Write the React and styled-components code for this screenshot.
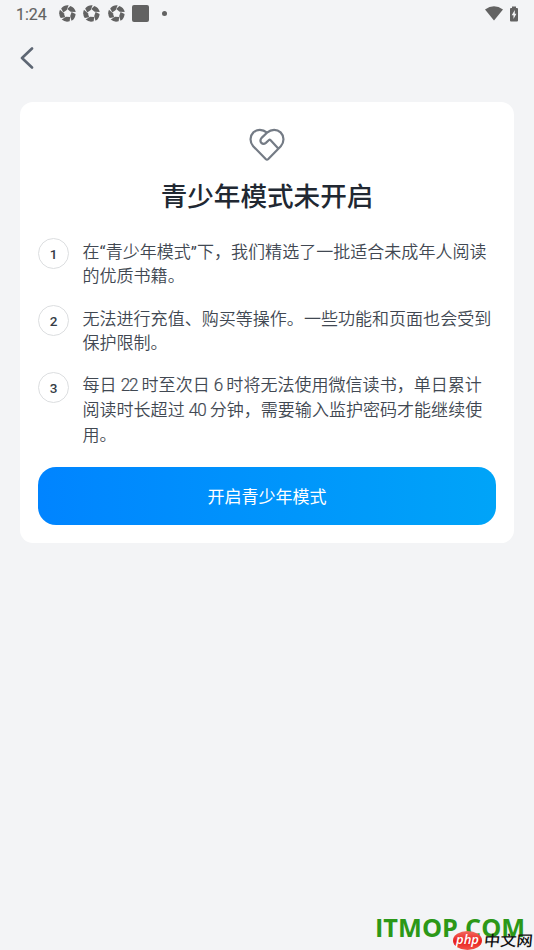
import React from "react";
import styled, { createGlobalStyle } from "styled-components";

const GlobalStyle = createGlobalStyle`
  * { box-sizing: border-box; }
  body {
    margin: 0;
    background: #f3f4f6;
    font-family: Roboto, "Noto Sans CJK SC", sans-serif;
  }
`;

const Screen = styled.div`
  position: relative;
  width: 534px;
  height: 950px;
  overflow: hidden;
  background: #f3f4f6;
`;

const StatusBar = styled.header`
  display: flex;
  align-items: center;
  justify-content: space-between;
  height: 27px;
  padding: 0 15px 0 16px;
  color: #626262;
`;

const StatusGroup = styled.div`
  display: flex;
  align-items: center;
  gap: ${(p) => p.$gap}px;
`;

const Clock = styled.span`
  width: 36px;
  padding-top: 2px;
  font-size: 16px;
  line-height: 26px;
  letter-spacing: 0;
  -webkit-text-stroke: 0.15px currentColor;
  margin-right: -1px;
`;

const Square = styled.span`
  width: 17px;
  height: 17px;
  border-radius: 2px;
  background: #626262;
`;

const Dot = styled.span`
  width: 5px;
  height: 5px;
  margin-left: 5px;
  border-radius: 50%;
  background: #626262;
`;

const Icon = styled.svg`
  display: block;
  flex: none;
`;

const NavBar = styled.nav`
  display: flex;
  align-items: center;
  height: 62px;
  padding-left: 20px;
`;

const BackButton = styled.button`
  display: flex;
  padding: 0;
  border: 0;
  background: none;
`;

const Card = styled.main`
  display: flex;
  flex-direction: column;
  align-items: center;
  width: 494px;
  height: 441px;
  margin: 13.4px 20px 0;
  padding: 26px 18px 18px;
  border-radius: 13px;
  background: #fff;
`;

const Title = styled.h1`
  margin: 12.6px 0 0;
  color: #212832;
  font-family: "Noto Sans CJK SC", sans-serif;
  font-size: 26.6px;
  font-weight: 500;
  line-height: 40px;
  white-space: nowrap;
`;

const Rules = styled.ol`
  display: flex;
  flex-direction: column;
  gap: 17.6px;
  width: 100%;
  margin: 24.9px 0 0;
  padding: 0;
  list-style: none;
`;

const Rule = styled.li`
  display: flex;
  gap: 13.5px;
`;

const Badge = styled.span`
  display: flex;
  flex: none;
  align-items: center;
  justify-content: center;
  width: 31px;
  height: 31px;
  padding-top: 1px;
  margin-top: -1.7px;
  border: 1px solid #dcdee0;
  border-radius: 50%;
  color: #353c46;
  font-size: 13.5px;
  font-weight: 500;
`;

const RuleText = styled.p`
  margin: 0;
  color: #414852;
  font-size: 17.04px;
  font-weight: 350;
  line-height: 24.6px;
  white-space: nowrap;
`;

const Num = styled.span`
  display: inline-block;
  line-height: 1;
  letter-spacing: -1.1px;
  -webkit-text-stroke: 0.2px currentColor;
  transform: scaleY(1.06);
`;

const Quote = styled.span`
  font-weight: 400;
  letter-spacing: 0.1px;
`;

const PrimaryButton = styled.button`
  width: 458px;
  height: 58px;
  margin-top: auto;
  padding: 0;
  border: 0;
  border-radius: 18px;
  background: linear-gradient(90deg, #0084ff, #00a4f8);
  color: #fff;
  font-family: "Noto Sans CJK SC", sans-serif;
  font-size: 17.04px;
  line-height: 58px;
`;

const SiteMark = styled.div`
  position: absolute;
  left: 375px;
  top: 910px;
  color: #2c9818;
  font-family: "Open Sans", sans-serif;
  font-size: 25.3px;
  font-weight: 700;
  line-height: 34px;
  letter-spacing: 0;
  white-space: nowrap;
`;

const PhpMark = styled.div`
  position: absolute;
  left: 453px;
  top: 931px;
  display: flex;
  align-items: center;
  height: 19px;
`;

const PhpOval = styled.span`
  width: 29px;
  height: 19px;
  border-radius: 50%;
  background: linear-gradient(#f36a60, #e8211e 55%, #f35248);
  color: #fff;
  font: italic 600 13px/16px "Open Sans", sans-serif;
  text-align: center;
`;

const PhpName = styled.span`
  margin-left: 2px;
  color: #111;
  font: 500 16.3px/18px "Noto Sans CJK SC", sans-serif;
  white-space: nowrap;
  transform: translateY(-1px) scaleY(0.9) skewX(-5deg);
`;

const Shutter = () => (
  <Icon width="17" height="17" viewBox="0 0 17 17">
    {[-20, 52, 124, 196, 268].map((angle) => (
      <path
        key={angle}
        d="M4.3 1.6Q8.3-.9 12.4 1.1L9 4.9L4.9 6Z"
        fill="#626262"
        transform={`rotate(${angle} 8.5 8.5)`}
      />
    ))}
  </Icon>
);

const rules = [
  [
    <>在<Quote>“</Quote>青少年模式<Quote>”</Quote>下，我们精选了一批适合未成年人阅读</>,
    "的优质书籍。",
  ],
  ["无法进行充值、购买等操作。一些功能和页面也会受到", "保护限制。"],
  [
    <>每日 <Num>22</Num> 时至次日 <Num>6</Num> 时将无法使用微信读书，单日累计</>,
    <>阅读时长超过 <Num>40</Num> 分钟，需要输入监护密码才能继续使</>,
    "用。",
  ],
];

export default function App() {
  return (
    <Screen>
      <GlobalStyle />
      <StatusBar>
        <StatusGroup $gap={7.5}>
          <Clock>1:24</Clock>
          <Shutter />
          <Shutter />
          <Shutter />
          <Square />
          <Dot />
        </StatusGroup>
        <StatusGroup $gap={6}>
          <Icon width="18" height="15" viewBox="0 0 18 15">
            <path d="M0 3.5Q9-3.2 18 3.5L9 14.5Z" fill="#626262" />
          </Icon>
          <Icon width="10" height="16" viewBox="0 0 10 16">
            <path d="M3 .5h4V2h1q1 0 1 1v11.5q0 1-1 1H2q-1 0-1-1V3q0-1 1-1h1Z" fill="#626262" />
            <path d="M5.8 4L2.7 9.3h1.8V13L7.4 7.8H5.8Z" fill="#f3f4f6" />
          </Icon>
        </StatusGroup>
      </StatusBar>
      <NavBar>
        <BackButton aria-label="返回">
          <Icon width="14" height="22" viewBox="0 0 14 22">
            <path d="M12 1.5L2 11L12 20.5" fill="none" stroke="#5d6673" strokeWidth="2.6" strokeLinecap="round" strokeLinejoin="round" />
          </Icon>
        </BackButton>
      </NavBar>
      <Card>
        <Icon width="36" height="34" viewBox="0 0 36 34">
          <g fill="none" stroke="#747b85" strokeWidth="2.2" strokeLinecap="round" strokeLinejoin="round">
            <path d="M18 4.7C13.5.8 8 1 4.4 4.4C.6 8.2.6 14 4.2 18.2L16.7 31Q18 32.2 19.3 31L31.8 18.2C35.4 14.2 35.4 8.2 31.6 4.4C28 1 22.5.8 18 4.7L12.6 9.9C9.6 13.8 13.6 17.6 16.9 14.9L20 12Q20.7 11.4 21.4 12.1L28.8 20" />
          </g>
        </Icon>
        <Title>青少年模式未开启</Title>
        <Rules>
          {rules.map((lines, index) => (
            <Rule key={index}>
              <Badge>{index + 1}</Badge>
              <RuleText>
                {lines.map((line, i) => (
                  <React.Fragment key={i}>
                    {i > 0 && <br />}
                    {line}
                  </React.Fragment>
                ))}
              </RuleText>
            </Rule>
          ))}
        </Rules>
        <PrimaryButton>开启青少年模式</PrimaryButton>
      </Card>
      <SiteMark>ITMOP.COM</SiteMark>
      <PhpMark>
        <PhpOval>php</PhpOval>
        <PhpName>中文网</PhpName>
      </PhpMark>
    </Screen>
  );
}
